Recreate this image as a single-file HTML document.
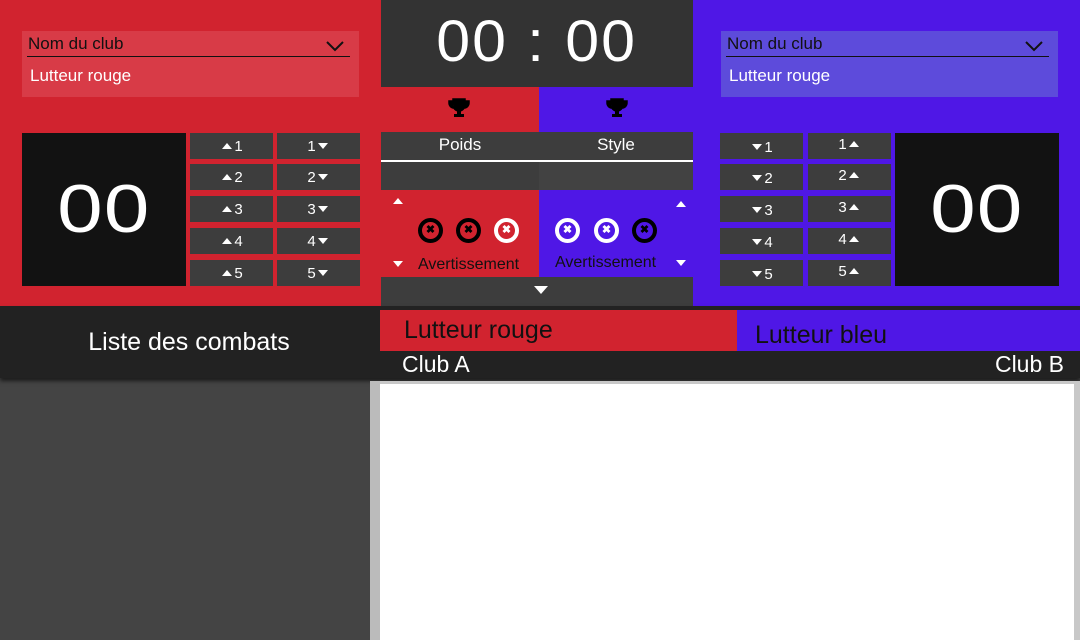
<!DOCTYPE html>
<html><head><meta charset="utf-8"><style>
*{margin:0;padding:0;box-sizing:border-box}
body{width:1080px;height:640px;overflow:hidden;background:#444;font-family:"Liberation Sans",sans-serif;position:relative}
.a{position:absolute}
.red{background:#d1232f}.blue{background:#4f17e6}
.btn{position:absolute;width:83px;height:26px;background:#3d3d3d;color:#fff;font-size:15px;text-align:center;line-height:27px}
.up,.dn{display:inline-block;width:0;height:0;border-left:5px solid transparent;border-right:5px solid transparent;vertical-align:middle;margin:0 2px}
.up{border-bottom:6px solid #fff;margin-top:-3px}
.dn{border-top:6px solid #fff;margin-top:-2px}
.score{position:absolute;background:#121212;color:#fff;font-size:68px;text-align:center;line-height:153px;width:164px;height:153px;letter-spacing:1px}
.score span{display:inline-block;transform:scaleX(1.2)}
.sel{position:absolute;width:337px;height:66px}
.sel .t{position:absolute;left:6px;top:3px;font-size:17px;color:#111}
.sel .l{position:absolute;left:5px;right:9px;top:25px;border-top:1.5px solid #111}
.sel .n{position:absolute;left:8px;top:35px;font-size:17px;color:#fff}
.ch{position:absolute;right:15px;top:9px}
.x{position:absolute;width:25px;height:25px;border-radius:50%;border:4px solid #000;top:218px}
.x:after{content:"✖";position:absolute;left:0;right:0;top:0;text-align:center;font-size:11px;line-height:17px;color:#000;font-weight:bold}
.x.w{border-color:#fff}.x.w:after{color:#fff}
</style></head><body>
<div class="a red" style="left:0;top:0;width:381px;height:306px"></div>
<div class="a blue" style="left:693px;top:0;width:387px;height:306px"></div>
<div class="a" style="left:381px;top:0;width:312px;height:87px;background:#333;color:#fff;font-size:58px;text-align:center;line-height:84px;letter-spacing:2px"><span style="display:inline-block;transform:scaleX(1.05)">00 : 00</span></div>
<div class="a red" style="left:381px;top:87px;width:158px;height:190px"></div>
<div class="a blue" style="left:539px;top:87px;width:154px;height:190px"></div>
<svg class="a" style="left:448px;top:98px" width="22" height="20" viewBox="0 0 22 20"><path d="M5 1h12v6a6 6 0 0 1-12 0z M5 3H1v2a5 5 0 0 0 5 5 M17 3h4v2a5 5 0 0 1-5 5" fill="#000" stroke="#000" stroke-width="1.5"/><rect x="9" y="12" width="4" height="4" fill="#000"/><rect x="6" y="16" width="10" height="3" fill="#000"/></svg>
<svg class="a" style="left:606px;top:98px" width="22" height="20" viewBox="0 0 22 20"><path d="M5 1h12v6a6 6 0 0 1-12 0z M5 3H1v2a5 5 0 0 0 5 5 M17 3h4v2a5 5 0 0 1-5 5" fill="#000" stroke="#000" stroke-width="1.5"/><rect x="9" y="12" width="4" height="4" fill="#000"/><rect x="6" y="16" width="10" height="3" fill="#000"/></svg>
<div class="a" style="left:381px;top:132px;width:312px;height:29px;background:#3d3d3d;color:#fff;font-size:17px;line-height:26px">
<span class="a" style="left:0;width:158px;text-align:center">Poids</span><span class="a" style="left:158px;width:154px;text-align:center">Style</span></div>
<div class="a" style="left:381px;top:160px;width:312px;height:2px;background:#fff"></div>
<div class="a" style="left:381px;top:162px;width:158px;height:28px;background:#3d3d3d"></div>
<div class="a" style="left:539px;top:162px;width:154px;height:28px;background:#424242"></div>
<span class="a up" style="left:391px;top:201px"></span>
<span class="a dn" style="left:391px;top:263px"></span>
<span class="a up" style="left:674px;top:204px"></span>
<span class="a dn" style="left:674px;top:262px"></span>
<div class="x" style="left:418px"></div><div class="x" style="left:456px"></div><div class="x w" style="left:494px"></div>
<div class="x w" style="left:555px"></div><div class="x w" style="left:594px"></div><div class="x" style="left:632px"></div>
<div class="a" style="left:418px;top:256px;font-size:16px;color:#111">Avertissement</div>
<div class="a" style="left:555px;top:254px;font-size:16px;color:#111">Avertissement</div>
<div class="a" style="left:381px;top:277px;width:312px;height:29px;background:#3d3d3d"></div>
<span class="a dn" style="left:532px;top:288px;border-left-width:7px;border-right-width:7px;border-top-width:8px"></span>

<div class="sel" style="left:22px;top:31px;background:#d83b47"><span class="t">Nom du club</span><div class="l"></div><span class="n">Lutteur rouge</span>
<svg class="ch" width="18" height="12" viewBox="0 0 18 12"><path d="M1 2l8 8 8-8" fill="none" stroke="#111" stroke-width="2"/></svg></div>
<div class="sel" style="left:721px;top:31px;background:#5d4bdb"><span class="t">Nom du club</span><div class="l"></div><span class="n">Lutteur rouge</span>
<svg class="ch" width="18" height="12" viewBox="0 0 18 12"><path d="M1 2l8 8 8-8" fill="none" stroke="#111" stroke-width="2"/></svg></div>

<div class="score" style="left:22px;top:133px"><span>00</span></div>
<div class="score" style="left:895px;top:133px"><span>00</span></div>

<div class="btn" style="left:190px;top:133px"><i class="up"></i>1</div><div class="btn" style="left:277px;top:133px">1<i class="dn"></i></div>
<div class="btn" style="left:190px;top:164px"><i class="up"></i>2</div><div class="btn" style="left:277px;top:164px">2<i class="dn"></i></div>
<div class="btn" style="left:190px;top:196px"><i class="up"></i>3</div><div class="btn" style="left:277px;top:196px">3<i class="dn"></i></div>
<div class="btn" style="left:190px;top:228px"><i class="up"></i>4</div><div class="btn" style="left:277px;top:228px">4<i class="dn"></i></div>
<div class="btn" style="left:190px;top:260px"><i class="up"></i>5</div><div class="btn" style="left:277px;top:260px">5<i class="dn"></i></div>

<div class="btn" style="left:720px;top:133px;line-height:30px"><i class="dn"></i>1</div><div class="btn" style="left:808px;top:133px;line-height:24px">1<i class="up"></i></div>
<div class="btn" style="left:720px;top:164px;line-height:30px"><i class="dn"></i>2</div><div class="btn" style="left:808px;top:164px;line-height:24px">2<i class="up"></i></div>
<div class="btn" style="left:720px;top:196px;line-height:30px"><i class="dn"></i>3</div><div class="btn" style="left:808px;top:196px;line-height:24px">3<i class="up"></i></div>
<div class="btn" style="left:720px;top:228px;line-height:30px"><i class="dn"></i>4</div><div class="btn" style="left:808px;top:228px;line-height:24px">4<i class="up"></i></div>
<div class="btn" style="left:720px;top:260px;line-height:30px"><i class="dn"></i>5</div><div class="btn" style="left:808px;top:260px;line-height:24px">5<i class="up"></i></div>

<div class="a" style="left:0;top:306px;width:1080px;height:72px;background:#222;box-shadow:0 3px 4px rgba(0,0,0,.6)"></div>
<div class="a" style="left:0;top:306px;width:378px;height:72px;color:#fff;font-size:25px;text-align:center;line-height:72px">Liste des combats</div>
<div class="a red" style="left:380px;top:310px;width:357px;height:41px;font-size:25px;color:#111;padding-left:24px;line-height:40px">Lutteur rouge</div>
<div class="a blue" style="left:737px;top:310px;width:343px;height:41px;font-size:25px;color:#111;padding-left:18px;line-height:50px">Lutteur bleu</div>
<div class="a" style="left:402px;top:351px;font-size:23px;color:#fff">Club A</div>
<div class="a" style="right:16px;top:351px;font-size:23px;color:#fff">Club B</div>
<div class="a" style="left:370px;top:381px;width:10px;height:259px;background:#bbb"></div>
<div class="a" style="left:380px;top:381px;width:700px;height:259px;background:#c8c8c8"></div>
<div class="a" style="left:380px;top:384px;width:694px;height:256px;background:#fff"></div>
</body></html>
